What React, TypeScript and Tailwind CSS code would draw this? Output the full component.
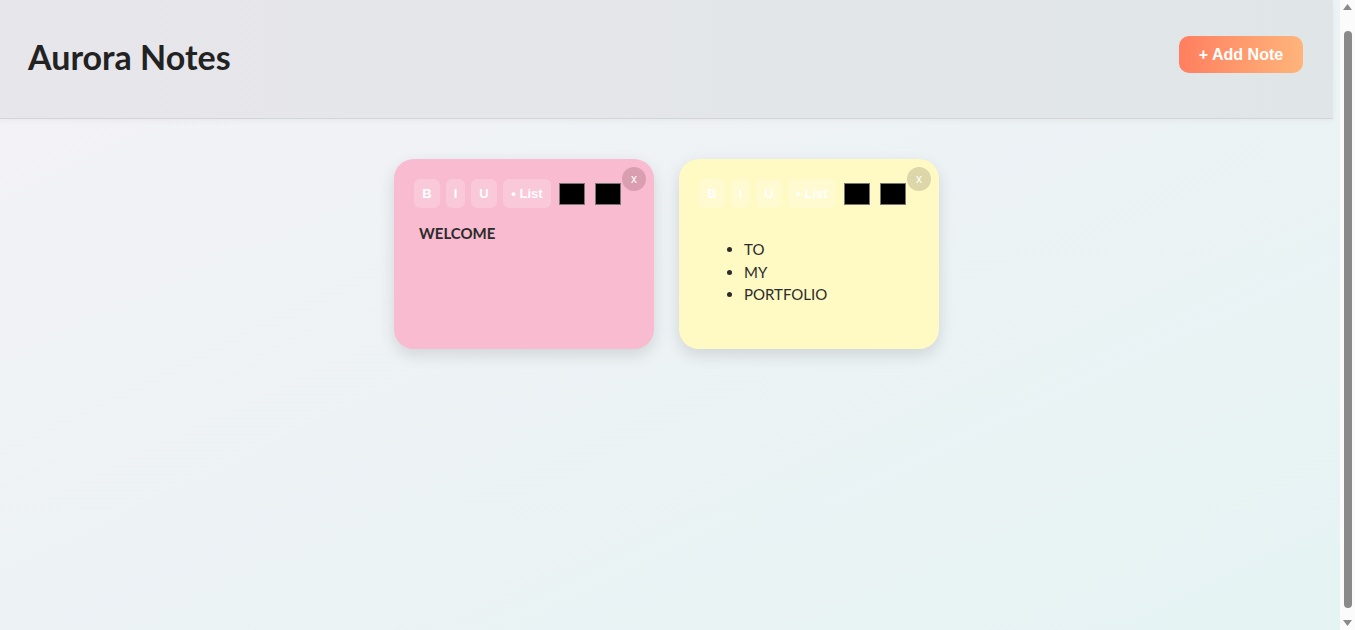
import { useState } from 'react';

type Note = {
  id: number;
  color: string;
  closeBg: string;
  kind: 'text' | 'list';
  items: string[];
};

const notes: Note[] = [
  { id: 1, color: 'bg-[#f8bbd0]', closeBg: 'bg-[#d99fb1]', kind: 'text', items: ['WELCOME'] },
  { id: 2, color: 'bg-[#fff9c4]', closeBg: 'bg-[#dcd6a8]', kind: 'list', items: ['TO', 'MY', 'PORTFOLIO'] },
];

function Toolbar() {
  const btn =
    'h-[29px] rounded-md bg-white/20 text-white font-bold text-[13px] flex items-center justify-center font-["Liberation_Sans",Arial,sans-serif]';
  return (
    <div className="flex items-center">
      <button className={`${btn} w-[26px]`}>B</button>
      <button className={`${btn} w-[19px] ml-[6px]`}>I</button>
      <button className={`${btn} w-[26px] ml-[6px]`}>U</button>
      <button className={`${btn} w-[48px] ml-[6px]`}>• List</button>
      <div className="w-[26px] h-[22px] bg-black border border-[#767676] ml-[8px]" />
      <div className="w-[26px] h-[22px] bg-black border border-[#767676] ml-[10px]" />
    </div>
  );
}

function NoteCard({ note }: { note: Note }) {
  return (
    <div
      className={`relative w-[260px] h-[190px] rounded-[20px] p-5 ${note.color} shadow-[0_6px_16px_rgba(0,0,0,0.12)]`}
    >
      <button
        className={`absolute top-2 right-2 w-6 h-6 rounded-full ${note.closeBg} text-white text-[12px] leading-none flex items-center justify-center font-["Liberation_Sans",Arial,sans-serif]`}
      >
        x
      </button>
      <Toolbar />
      <div className="mt-[14px] px-[5px] text-[15px] leading-[22px] text-[#2b2b2b]">
        {note.kind === 'text' ? (
          <div className="font-bold">{note.items[0]}</div>
        ) : (
          <ul className="list-disc pl-10 mt-[30px] leading-[22.5px]">
            {note.items.map((it) => (
              <li key={it}>{it}</li>
            ))}
          </ul>
        )}
      </div>
    </div>
  );
}

// drawn stand-in for the browser's classic scrollbar
function Scrollbar() {
  return (
    <div className="w-[15px] h-screen shrink-0 bg-[#fbfbfb] flex flex-col items-center">
      <svg width="9" height="6" viewBox="0 0 9 6" className="mt-[4px]">
        <path d="M0 6 L4.5 0 L9 6 Z" fill="#8a8a8a" />
      </svg>
      <div className="w-[8px] flex-1 mt-[21px] mb-[12px] rounded-full bg-[#8a8a8a]" />
      <svg width="9" height="6" viewBox="0 0 9 6" className="mb-[4px]">
        <path d="M0 0 L9 0 L4.5 6 Z" fill="#8a8a8a" />
      </svg>
    </div>
  );
}

export default function App() {
  const [list] = useState(notes);

  return (
    <div className="flex h-screen overflow-hidden">
      <div className="flex-1 min-h-[645px] bg-gradient-to-br from-[#f4f2f7] to-[#e5f3f3] font-['Lato','Open_Sans',sans-serif]">
        {/* Header */}
        <header className="mr-[7px] h-[119px] flex items-center justify-between pl-7 pr-[30px] bg-gradient-to-r from-[#e7e6eb] to-[#e0e6e8] border-b border-[#d3d3d8] shadow-[0_2px_6px_rgba(0,0,0,0.04)]">
          <h1 className="text-[34px] font-bold text-[#222] mb-[6px]">Aurora Notes</h1>
          <button className="w-[124px] h-[37px] mb-[9px] rounded-[10px] bg-gradient-to-r from-[#ff7e5f] to-[#feb47b] text-white font-bold text-[16px] font-['Liberation_Sans',Arial,sans-serif]">
            + Add Note
          </button>
        </header>

        {/* Notes */}
        <main className="flex justify-center gap-[25px] pt-10 pr-[7px]">
          {list.map((n) => (
            <NoteCard key={n.id} note={n} />
          ))}
        </main>
      </div>
      <Scrollbar />
    </div>
  );
}
